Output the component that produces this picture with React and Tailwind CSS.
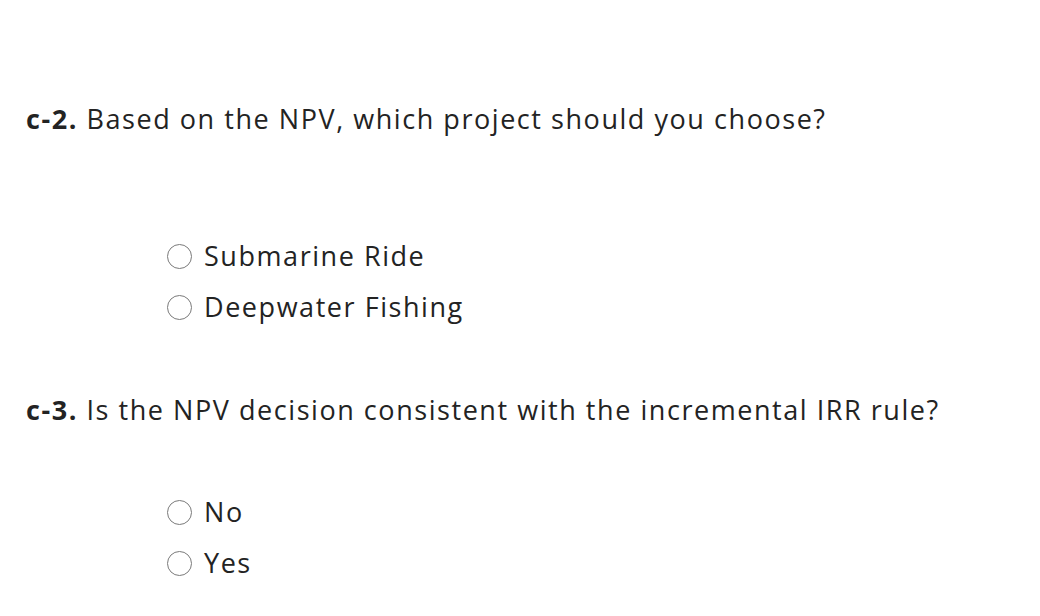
import React from 'react';

function Radio({ label }) {
  return (
    <label className="flex items-center h-[51px] gap-[12px]">
      <span className="w-[25px] h-[25px] rounded-full border-[1.5px] border-[#7a7a7a] bg-white shrink-0"></span>
      <span>{label}</span>
    </label>
  );
}

export default function App() {
  return (
    <div
      className="w-[1040px] h-[616px] bg-white text-[#232323] text-[27px] tracking-[1.55px] px-[26px] pt-[99px] overflow-hidden"
      style={{ fontFamily: '"Open Sans", "Liberation Sans", sans-serif' }}
    >
      <p className="leading-[40px]">
        <span className="font-bold">c-2.</span> Based on the NPV, which project should you choose?
      </p>
      <div className="pl-[141px] pt-[92px]">
        <Radio label="Submarine Ride" />
        <Radio label="Deepwater Fishing" />
      </div>
      <p className="leading-[40px] pt-[57px]">
        <span className="font-bold">c-3.</span> Is the NPV decision consistent with the incremental IRR rule?
      </p>
      <div className="pl-[141px] pt-[57px]">
        <Radio label="No" />
        <Radio label="Yes" />
      </div>
    </div>
  );
}
